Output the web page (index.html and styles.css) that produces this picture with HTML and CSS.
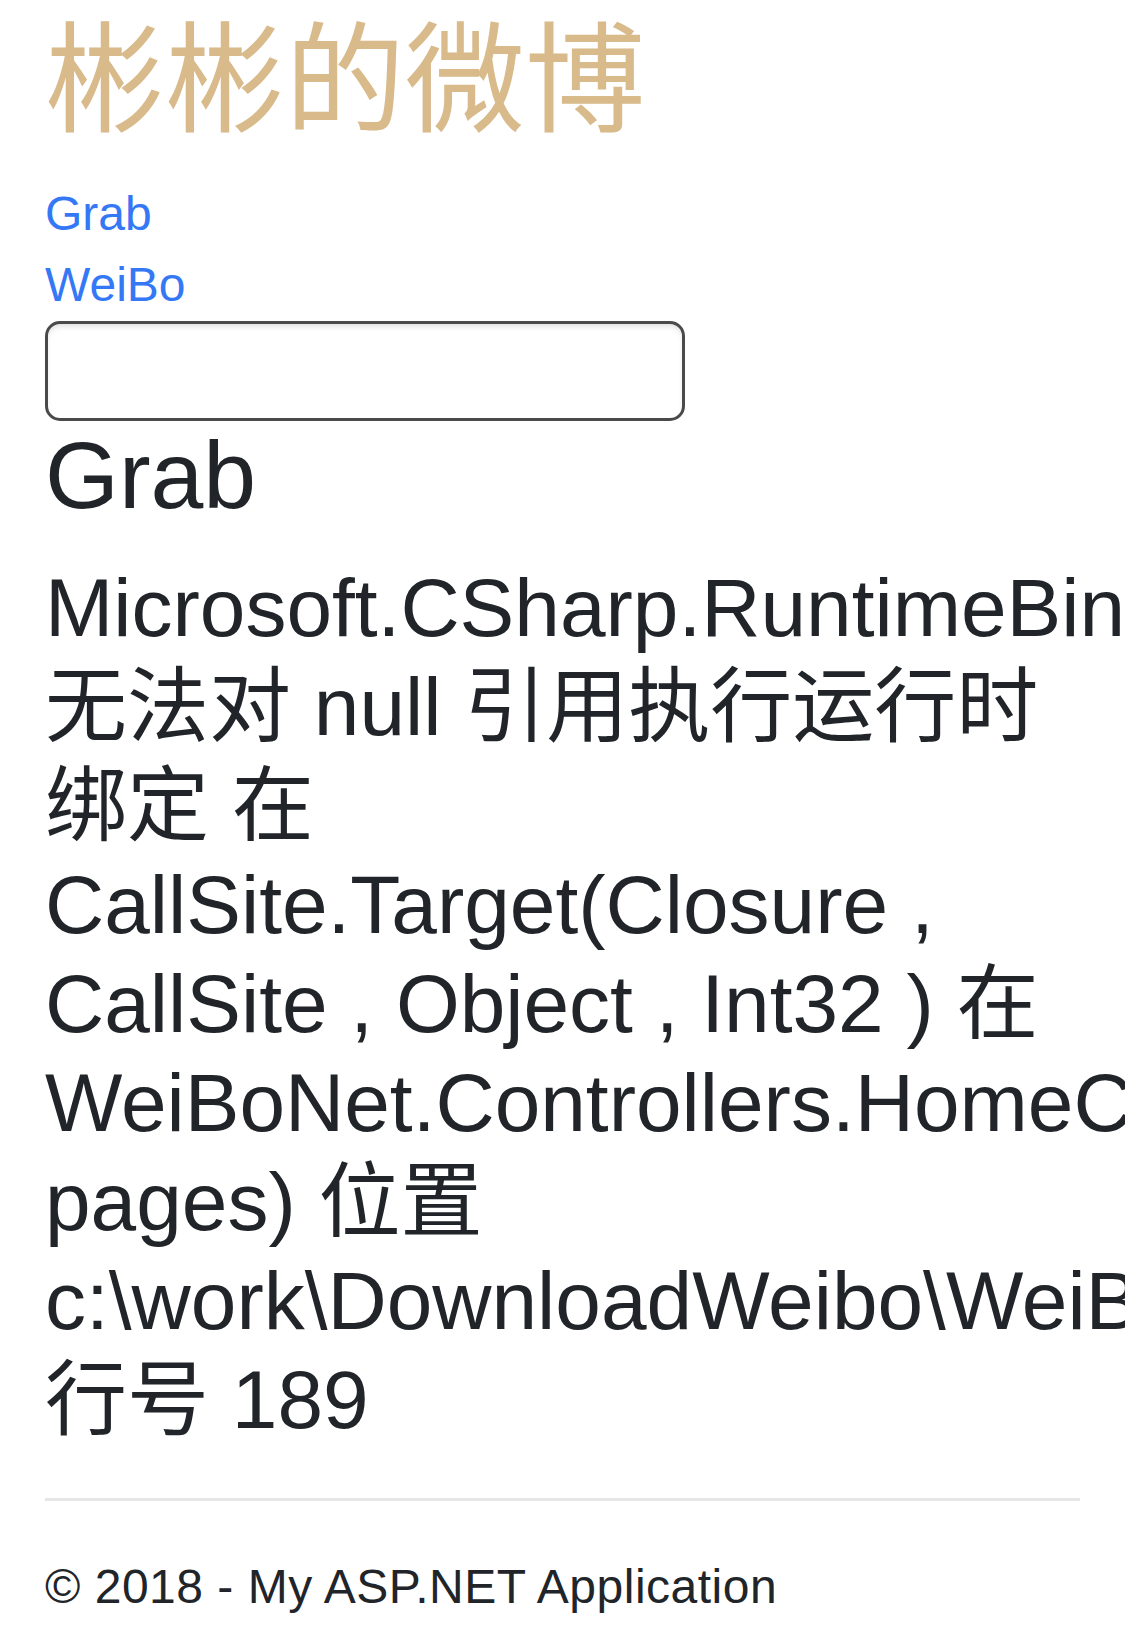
FILE: index.html
```html
<!DOCTYPE html>
<html lang="zh-CN">
<head>
<meta charset="utf-8">
<title>彬彬的微博</title>
<link rel="stylesheet" href="styles.css">
</head>
<body>
<div class="body-content">
  <h1 class="site-title">彬彬的微博</h1>
  <nav class="nav-links">
    <a class="nav-link" href="#">Grab</a>
    <a class="nav-link" href="#">WeiBo</a>
  </nav>
  <input type="text" class="search-input">
  <h2 class="page-title">Grab</h2>
  <p class="error-text">Microsoft.CSharp.RuntimeBinder.RuntimeBinderException: 无法对 null 引用执行运行时绑定 在 CallSite.Target(Closure , CallSite , Object , Int32 ) 在 WeiBoNet.Controllers.HomeController.Grab(Int32 pages) 位置 c:\work\DownloadWeibo\WeiBoNet\WeiBoNet\Controllers\HomeController.cs:行号 189</p>
  <hr class="divider">
  <footer class="site-footer">
    <p class="footer-text">© 2018 - My ASP.NET Application</p>
  </footer>
</div>
</body>
</html>
```
FILE: styles.css
```css
html {
  overflow-x: hidden;
}

body {
  margin: 0;
  background: #ffffff;
  color: #212529;
  font-family: "Liberation Sans", "Noto Sans CJK SC", sans-serif;
}

.body-content {
  padding: 0 45px;
}

.site-title {
  margin: 9px 0 25px;
  font-size: 120px;
  line-height: 144px;
  font-weight: 400;
  color: #d8ba8b;
}

.nav-links {
  display: flex;
  flex-direction: column;
  align-items: flex-start;
}

.nav-link {
  font-size: 48px;
  line-height: 71px;
  color: #3478f6;
  text-decoration: none;
}

.search-input {
  display: block;
  box-sizing: border-box;
  width: 640px;
  height: 100px;
  margin: 1px 0 0;
  padding: 0 15px;
  border: 3px solid #4a4a4a;
  border-radius: 15px;
  background: #ffffff;
  box-shadow: inset 0 4px 6px -2px rgba(0, 0, 0, 0.14);
  font-size: 48px;
  font-family: inherit;
  outline: none;
}

.page-title {
  margin: 0 0 28px;
  font-size: 95px;
  line-height: 109px;
  font-weight: 400;
}

.error-text {
  margin: 0;
  font-size: 82px;
  line-height: 99px;
}

.divider {
  margin: 49px 0 50px;
  border: 0;
  border-top: 3px solid #e6e6e6;
  height: 0;
}

.site-footer {
  margin: 0;
}

.footer-text {
  margin: 0;
  font-size: 48px;
  line-height: 72px;
  letter-spacing: 0.5px;
}
```
